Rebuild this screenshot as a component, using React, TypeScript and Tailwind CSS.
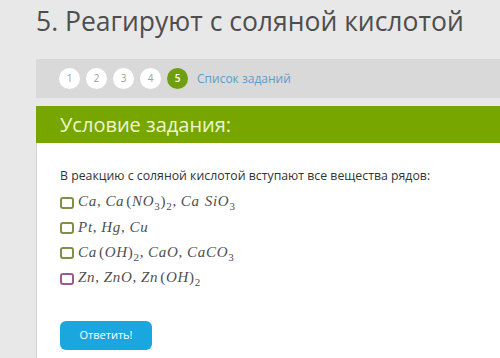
import React from "react";

const M = ({ s }: { s: string }) => {
  const parts: React.ReactNode[] = [];
  let i = 0;
  let k = 0;
  while (i < s.length) {
    const c = s[i];
    if (c === "_") {
      parts.push(
        <span key={k++} className="text-[11px] not-italic inline-block" style={{ verticalAlign: "-4px" }}>
          {s[i + 1]}
        </span>
      );
      i += 2;
      continue;
    }
    if (/[A-Za-z]/.test(c)) {
      parts.push(
        <span key={k++} className="italic">
          {c}
        </span>
      );
    } else if (c === ",") {
      parts.push(
        <span key={k++} className="mr-[4px]">
          ,
        </span>
      );
    } else if (c === " ") {
      parts.push(<span key={k++} className="inline-block w-[5px]" />);
    } else if (c === "(") {
      parts.push(
        <span key={k++} className="ml-[2px]">
          (
        </span>
      );
    } else {
      parts.push(<span key={k++}>{c}</span>);
    }
    i++;
  }
  return <span>{parts}</span>;
};

const options = [
  { s: "Ca,Ca(NO_3)_2,Ca SiO_3", c: "border-[#7f8f45]" },
  { s: "Pt,Hg,Cu", c: "border-[#7f8f45]" },
  { s: "Ca(OH)_2,CaO,CaCO_3", c: "border-[#7f8f45]" },
  { s: "Zn,ZnO,Zn(OH)_2", c: "border-[#9a5a92]" },
];

export default function App() {
  return (
    <div
      className="w-[500px] h-[358px] bg-[#e8e8e8] overflow-hidden pl-[36px] flex flex-col"
      style={{ fontFamily: '"Open Sans", "Noto Sans", sans-serif' }}
    >
      <div className="h-[59px] shrink-0 pt-[2px] text-[26.5px] leading-[38px] text-[#4e4e4e] whitespace-nowrap">
        5. Реагируют с соляной кислотой
      </div>
      <div className="h-[39px] shrink-0 bg-[#d9d9d9] flex items-center pl-[23px]">
        {[1, 2, 3, 4].map((n) => (
          <div
            key={n}
            className="w-[21px] h-[21px] rounded-full bg-white text-[#9aa3a3] text-[10px] flex items-center justify-center mr-[6px]"
          >
            {n}
          </div>
        ))}
        <div className="w-[21px] h-[21px] rounded-full bg-[#6f9f0e] text-white text-[10px] font-semibold flex items-center justify-center">
          5
        </div>
        <span className="ml-[9px] text-[12px] text-[#5d9cc9]">Список заданий</span>
      </div>
      <div className="h-[8px] shrink-0" />
      <div className="h-[37px] shrink-0 bg-[#78a600] flex items-center pl-[24px] text-[20px] text-[#eef6cf]">
        Условие задания:
      </div>
      <div className="flex-1 bg-white border-l border-[#d4d4d4] pl-[23px] pt-[24px]">
        <div className="text-[12.3px] leading-[18px] text-[#333] whitespace-nowrap">
          В реакцию с соляной кислотой вступают все вещества рядов:
        </div>
        <div className="mt-[5px] flex flex-col">
          {options.map((o, idx) => (
            <div key={idx} className={`flex items-center ${idx === 2 ? "h-[26px]" : "h-[25px]"}`}>
              <div className={`w-[14px] h-[12px] rounded-[3px] border-2 ${o.c} mr-[4px] shrink-0`} />
              <span
                className="text-[15px] tracking-[0.7px] text-[#4f4f4f] whitespace-nowrap"
                style={{ fontFamily: '"Liberation Serif", "DejaVu Serif", serif' }}
              >
                <M s={o.s} />
              </span>
            </div>
          ))}
        </div>
        <button className="mt-[30px] w-[92px] h-[29px] rounded-[6px] bg-[#1aa7df] text-white text-[11px] flex items-center justify-center">
          Ответить!
        </button>
      </div>
    </div>
  );
}
